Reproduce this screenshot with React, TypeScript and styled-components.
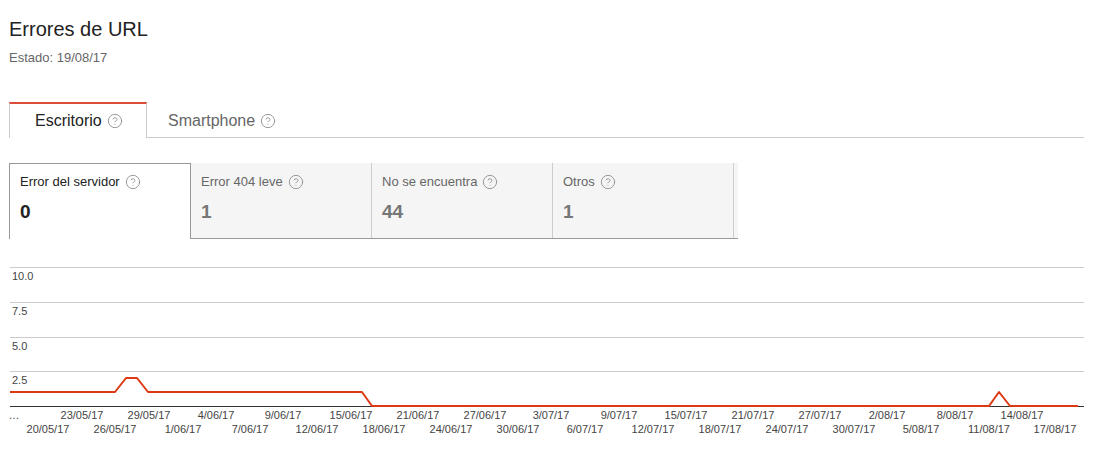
import styled, { createGlobalStyle } from "styled-components";
import { CircleHelp } from "lucide-react";

const GlobalStyle = createGlobalStyle`
  body {
    margin: 0;
    background: #fff;
    font-family: "Liberation Sans", Arial, sans-serif;
    color: #222;
  }
`;

const Page = styled.div`
  width: 1098px;
`;

const Head = styled.div`
  padding: 17px 0 0 9px;
`;

const Title = styled.h1`
  margin: 0;
  font-size: 20px;
  font-weight: normal;
  line-height: 24px;
  color: #222;
`;

const Status = styled.div`
  margin-top: 9px;
  font-size: 13px;
  line-height: 16px;
  color: #666;
`;

const TabBar = styled.div`
  display: flex;
  align-items: flex-start;
  margin-top: 36px;
  width: 1075px;
  height: 36px;
  box-sizing: border-box;
  border-bottom: 1px solid #ccc;
`;

const Tab = styled.div<{ $active?: boolean }>`
  display: flex;
  align-items: center;
  gap: 5px;
  box-sizing: border-box;
  height: ${(p) => (p.$active ? "36px" : "35px")};
  padding: ${(p) => (p.$active ? "0 25px 0 25px" : "0 20px")};
  font-size: 16px;
  color: ${(p) => (p.$active ? "#222" : "#666")};
  background: ${(p) => (p.$active ? "#fff" : "transparent")};
  border-top: 2px solid ${(p) => (p.$active ? "#dd4b39" : "transparent")};
  border-left: 1px solid ${(p) => (p.$active ? "#ccc" : "transparent")};
  border-right: 1px solid ${(p) => (p.$active ? "#ccc" : "transparent")};
  width: ${(p) => (p.$active ? "138px" : "auto")};
`;

const Help = styled(CircleHelp)`
  flex: none;
  color: #999;
`;

const CardRow = styled.div`
  display: flex;
  margin-top: 25px;
`;

const ActiveCard = styled.div`
  box-sizing: border-box;
  width: 182px;
  height: 76px;
  padding: 10px 10px 0;
  background: #fff;
  border: 1px solid #999;
  border-bottom: none;
`;

const CardGroup = styled.div`
  display: flex;
  box-sizing: border-box;
  height: 76px;
  padding-right: 4px;
  background: #f5f5f5;
  border-bottom: 1px solid #999;
`;

const Card = styled.div`
  box-sizing: border-box;
  width: 181px;
  padding: 11px 10px 0;
  border-right: 1px solid #ccc;
`;

const CardLabel = styled.div<{ $active?: boolean }>`
  display: flex;
  align-items: center;
  gap: 5px;
  font-size: 13px;
  line-height: 16px;
  color: ${(p) => (p.$active ? "#222" : "#666")};
`;

const CardValue = styled.div<{ $active?: boolean }>`
  margin-top: 11px;
  font-size: 19px;
  line-height: 22px;
  font-weight: bold;
  color: ${(p) => (p.$active ? "#222" : "#777")};
`;

const ChartArea = styled.div`
  margin-top: 21px;
  svg {
    display: block;
  }
  text {
    font-family: "Liberation Sans", Arial, sans-serif;
    font-size: 11px;
    fill: #444;
  }
`;

const cards = [
  { label: "Error 404 leve", value: "1" },
  { label: "No se encuentra", value: "44" },
  { label: "Otros", value: "1" },
];

const gridLines = [
  { y: 267, label: "10.0" },
  { y: 302, label: "7.5" },
  { y: 337, label: "5.0" },
  { y: 371, label: "2.5" },
];

const topDates = [
  "23/05/17", "29/05/17", "4/06/17", "9/06/17", "15/06/17", "21/06/17",
  "27/06/17", "3/07/17", "9/07/17", "15/07/17", "21/07/17", "27/07/17",
  "2/08/17", "8/08/17", "14/08/17",
];
const bottomDates = [
  "20/05/17", "26/05/17", "1/06/17", "7/06/17", "12/06/17", "18/06/17",
  "24/06/17", "30/06/17", "6/07/17", "12/07/17", "18/07/17", "24/07/17",
  "30/07/17", "5/08/17", "11/08/17", "17/08/17",
];
const topX = [82, 149, 216, 283, 351, 418, 485, 551, 619, 686, 753, 820, 887, 955, 1022];
const bottomX = [48, 115, 183, 250, 317, 384, 451, 518, 585, 653, 720, 787, 854, 921, 989, 1055];

const linePoints =
  "10,392 115,392 126,378 137,378 148,392 362,392 372,406 989,406 999,392 1010,406 1078,406";

const Chart = () => (
  <svg width={1098} height={185} viewBox="0 260 1098 185">
    {gridLines.map((g) => (
      <g key={g.label}>
        <line x1={10} x2={1084} y1={g.y + 0.5} y2={g.y + 0.5} stroke="#ccc" />
        <text x={12} y={g.y + 9} dominantBaseline="central">
          {g.label}
        </text>
      </g>
    ))}
    <line x1={10} x2={1084} y1={406.5} y2={406.5} stroke="#333" />
    <polyline
      points={linePoints}
      fill="none"
      stroke="#dc3912"
      strokeWidth={2}
      strokeLinejoin="round"
    />
    <text x={14} y={415} textAnchor="middle" dominantBaseline="central">
      …
    </text>
    {topDates.map((d, i) => (
      <text key={d} x={topX[i]} y={415} textAnchor="middle" dominantBaseline="central">
        {d}
      </text>
    ))}
    {bottomDates.map((d, i) => (
      <text key={d} x={bottomX[i]} y={429} textAnchor="middle" dominantBaseline="central">
        {d}
      </text>
    ))}
  </svg>
);

const App = () => {
  return (
    <Page>
      <GlobalStyle />
      <Head>
        <Title>Errores de URL</Title>
        <Status>Estado: 19/08/17</Status>
        <TabBar>
          <Tab $active>
            Escritorio <Help size={16} strokeWidth={1.5} />
          </Tab>
          <Tab>
            Smartphone <Help size={16} strokeWidth={1.5} />
          </Tab>
        </TabBar>
        <CardRow>
          <ActiveCard>
            <CardLabel $active>
              Error del servidor <Help size={16} strokeWidth={1.5} />
            </CardLabel>
            <CardValue $active>0</CardValue>
          </ActiveCard>
          <CardGroup>
            {cards.map((c) => (
              <Card key={c.label}>
                <CardLabel>
                  {c.label} <Help size={16} strokeWidth={1.5} />
                </CardLabel>
                <CardValue>{c.value}</CardValue>
              </Card>
            ))}
          </CardGroup>
        </CardRow>
      </Head>
      <ChartArea>
        <Chart />
      </ChartArea>
    </Page>
  );
};

export default App;
